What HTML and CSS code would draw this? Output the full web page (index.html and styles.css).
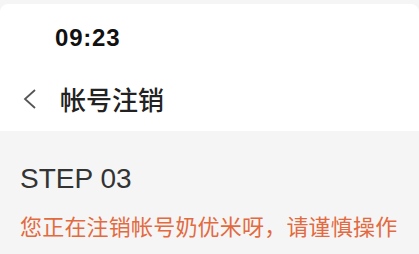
FILE: index.html
```html
<!DOCTYPE html>
<html lang="zh-CN">
<head>
    <meta charset="UTF-8">
    <meta name="viewport" content="width=device-width, initial-scale=1.0">
    <title>帐号注销</title>
    <link rel="stylesheet" href="styles.css">
</head>
<body>
    <div id="header">
        <div class="status-bar">
            <span class="time">09:23</span>
        </div>
        <div class="nav-bar">
            <span class="back">
                <svg width="16" height="22" viewBox="0 0 16 22">
                    <polyline points="13,2 3,11 13,20" fill="none" stroke="#555" stroke-width="1.8"/>
                </svg>
            </span>
            <span class="title">帐号注销</span>
        </div>
    </div>
    <div id="content">
        <div class="step">STEP 03</div>
        <div class="warning">您正在注销帐号奶优米呀，请谨慎操作</div>
    </div>
</body>
</html>
```

FILE: styles.css
```css
body {
    margin: 0;
    padding: 0;
    background-color: #f5f5f5;
    font-family: "Liberation Sans", "Noto Sans CJK SC", sans-serif;
    overflow: hidden;
}
#header {
    margin-top: 4px;
    height: 127px;
    background-color: #fff;
    border-radius: 8px 8px 0 0;
}
.status-bar {
    height: 62px;
    padding-top: 6px;
    box-sizing: border-box;
    display: flex;
    align-items: center;
    padding-left: 55px;
}
.time {
    font-size: 24px;
    font-weight: 600;
    color: #111;
    letter-spacing: 0.8px;
}
.nav-bar {
    height: 65px;
    display: flex;
    align-items: center;
    padding-left: 22px;
}
.back {
    display: flex;
    width: 38px;
}
.title {
    font-family: "Noto Sans CJK SC", sans-serif;
    font-size: 26px;
    font-weight: 500;
    color: #222;
}
#content {
    padding: 32px 19px 0 20px;
}
.step {
    font-size: 28px;
    line-height: 32px;
    color: #333;
}
.warning {
    margin-top: 17px;
    font-family: "Noto Sans CJK SC", sans-serif;
    font-size: 22px;
    line-height: 26px;
    letter-spacing: 0.2px;
    color: #e36a3f;
    white-space: nowrap;
}
```
